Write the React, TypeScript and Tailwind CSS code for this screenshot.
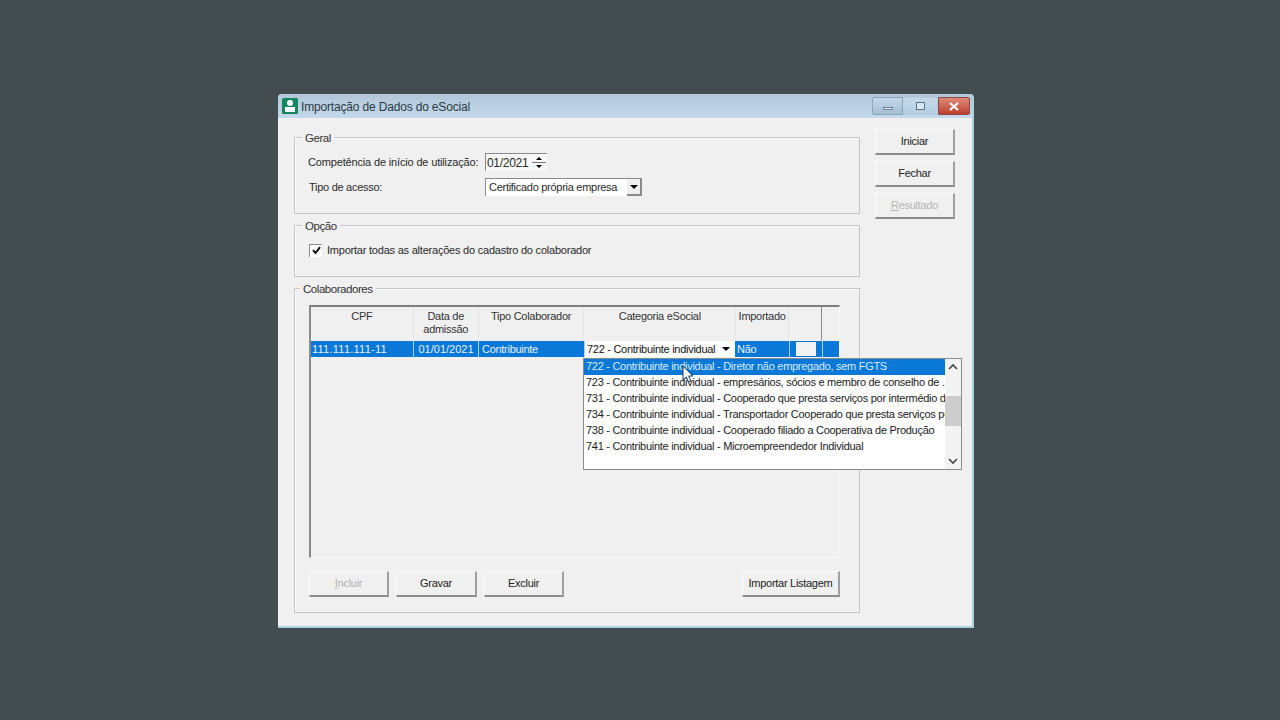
import React from "react";

const font = { fontFamily: '"Liberation Sans", Arial, sans-serif' };

function Btn({ label, w, disabled, u }: { label: string; w: string; disabled?: boolean; u?: boolean }) {
  return (
    <div className={`${w} h-[26px] flex items-center justify-center whitespace-nowrap bg-[#f0f0f0] border-t border-l border-t-[#fbfbfb] border-l-[#fbfbfb] border-r-2 border-b-2 border-r-[#a0a0a0] border-b-[#8c8c8c] ${disabled ? "text-[#b4b4b4]" : "text-[#222]"}`}>
      {u ? (
        <span>
          <span className="underline">{label[0]}</span>
          {label.slice(1)}
        </span>
      ) : (
        label
      )}
    </div>
  );
}

function Group({ title, h, children, left }: { title: string; h: string; children?: React.ReactNode; left: string }) {
  return (
    <div className={`relative ${h} border border-[#c4c6c6] shadow-[inset_1px_1px_0_#fafafa]`}>
      <div className={`absolute -top-[6px] ${left} px-[3px] bg-[#f0f0f1] leading-[13px] text-[#333] text-[11.5px] tracking-[-0.45px]`}>{title}</div>
      {children}
    </div>
  );
}

const options = [
  "722 - Contribuinte individual - Diretor não empregado, sem FGTS",
  "723 - Contribuinte individual - empresários, sócios e membro de conselho de ...",
  "731 - Contribuinte individual - Cooperado que presta serviços por intermédio de",
  "734 - Contribuinte individual - Transportador Cooperado que presta serviços por",
  "738 - Contribuinte individual - Cooperado filiado a Cooperativa de Produção",
  "741 - Contribuinte individual - Microempreendedor Individual",
];

const colW = ["w-[103px]", "w-[65px]", "w-[106px]", "w-[152px]", "w-[53px]", "w-[33px]"];

function Caret() {
  return <span className="block w-0 h-0 border-l-[4px] border-r-[4px] border-t-[4px] border-l-transparent border-r-transparent border-t-black" />;
}

export default function App() {
  return (
    <div className="w-[1280px] h-[720px] bg-[#434c4e] pt-[94px] pl-[278px] overflow-hidden text-[11px] tracking-[-0.28px]" style={font}>
      <div className="w-[696px] h-[534px] flex flex-col bg-[#f0f0f1] rounded-t-[4px] border-r-2 border-b-2 border-r-[#a9d4df] border-b-[#a9d4df] overflow-hidden">
        {/* title bar */}
        <div className="h-[24px] shrink-0 flex items-center bg-gradient-to-b from-[#b2c6d8] to-[#c3d9ec] pl-[4px] pr-[2px]">
          <svg width="16" height="16" viewBox="0 0 16 16" className="shrink-0">
            <rect width="16" height="16" rx="1.5" fill="#13885f" />
            <circle cx="8" cy="5" r="3" fill="#fff" />
            <rect x="3" y="9" width="10" height="5" fill="#fff" />
          </svg>
          <span className="ml-[3px] pt-px text-[12px] tracking-[-0.17px] text-[#2c3a44]">Importação de Dados do eSocial</span>
          <div className="ml-auto flex items-start h-[18px]">
            <div className="w-[31px] h-[18px] flex items-center justify-center rounded-l-[2px] border border-[#8ca4bb] bg-gradient-to-b from-[#c6d9ea] to-[#a4bdd4]">
              <span className="block w-[10px] h-[3px] mt-[5px] bg-[#e9f0f6] border border-[#6d8297]" />
            </div>
            <div className="w-[34px] h-[18px] flex items-center justify-center border-y border-[#b4cade] bg-gradient-to-b from-[#c6d9ea] to-[#b5cde2]">
              <span className="block w-[9px] h-[8px] bg-[#dce7f0] border border-[#5f7488]" />
            </div>
            <div className="ml-px w-[32px] h-[18px] flex items-center justify-center rounded-r-[2px] border border-[#8d4a42] bg-gradient-to-b from-[#de8a78] to-[#bd3f30]">
              <svg width="10" height="9" viewBox="0 0 10 9"><path d="M1 1 9 8M9 1 1 8" stroke="#fff" strokeWidth="2.2" /></svg>
            </div>
          </div>
        </div>

        {/* body */}
        <div className="relative flex-1 flex pl-[16px] pt-[11px]">
          <div className="w-[566px] mt-[8px] flex flex-col gap-[11px]">
            <Group title="Geral" h="h-[77px]" left="left-[7px]">
              <div className="flex items-center h-[22px] mt-[13px] pl-[13px] text-[#2a2a2a]">
                <span className="w-[177px] whitespace-nowrap tracking-[-0.16px]">Competência de início de utilização:</span>
                <div className="w-[62px] h-[18px] flex items-center bg-[#f7f7f7] border-t border-l border-[#8a8a8a]">
                  <span className="pl-[1px] text-[12px] tracking-[-0.3px]">01/2021</span>
                  <div className="ml-auto mr-[1px] w-[14px] h-[15px] flex flex-col items-center justify-between">
                    <span className="block w-0 h-0 mt-[2px] border-l-[3px] border-r-[3px] border-b-[3px] border-l-transparent border-r-transparent border-b-black" />
                    <span className="block w-full h-px bg-[#777]" />
                    <span className="block w-0 h-0 mb-[2px] border-l-[3px] border-r-[3px] border-t-[3px] border-l-transparent border-r-transparent border-t-black" />
                  </div>
                </div>
              </div>
              <div className="flex items-center h-[20px] mt-[4px] pl-[14px] text-[#2a2a2a]">
                <span className="w-[176px]">Tipo de acesso:</span>
                <div className="w-[157px] h-[18px] flex items-center bg-white border-t border-l border-[#8a8a8a] pl-[3px]">
                  <span className="whitespace-nowrap">Certificado própria empresa</span>
                  <div className="ml-auto w-[15px] h-[17px] flex items-center justify-center bg-[#f0f0f0] border-r-2 border-b-2 border-[#8c8c8c]">
                    <Caret />
                  </div>
                </div>
              </div>
            </Group>

            <Group title="Opção" h="h-[52px]" left="left-[7px]">
              <div className="flex items-center mt-[16px] pl-[14px] text-[#2a2a2a]">
                <div className="w-[13px] h-[13px] flex items-center justify-center bg-white border-t border-l border-[#8a8a8a]">
                  <svg width="9" height="9" viewBox="0 0 9 9"><path d="M1 4.2 3.5 7 8 1.2" fill="none" stroke="#111" strokeWidth="2" /></svg>
                </div>
                <span className="ml-[5px] tracking-[-0.22px]">Importar todas as alterações do cadastro do colaborador</span>
              </div>
            </Group>

            <Group title="Colaboradores" h="h-[325px]" left="left-[5px]">
              <div className="mx-[14px] mt-[16px] w-[531px] h-[253px] flex flex-col border-t-2 border-l-2 border-t-[#7d7f7f] border-l-[#8a8c8c] border-b border-b-[#f8f8f8] border-r border-r-[#f8f8f8]">
                <div className="h-[33px] flex leading-[13px] text-[#333] pr-[17px]">
                  {["CPF", "Data de\nadmissão", "Tipo Colaborador", "Categoria eSocial", "Importado", ""].map((t, i) => (
                    <div key={i} className={`${colW[i]} pt-[3px] text-center whitespace-pre-line border-r border-[#e2e2e2] last:border-r last:border-[#8a8a8a]`}>
                      {t}
                    </div>
                  ))}
                </div>
                <div className="h-[16px] mt-[1px] flex bg-[#0a78d6] leading-[16px] text-[#e6f1fb]">
                  <div className={`${colW[0]} pl-[1px] tracking-[0.25px] border-r border-[#a8d0f2]`}>111.111.111-11</div>
                  <div className={`${colW[1]} text-center tracking-[0px] border-r border-[#a8d0f2]`}>01/01/2021</div>
                  <div className={`${colW[2]} pl-[3px] border-r border-[#a8d0f2]`}>Contribuinte</div>
                  <div className={`${colW[3]} relative`}>
                    <div className="absolute left-0 top-0 w-[150px] h-[16px] flex items-center bg-white text-[#111] pl-[2px]">
                      <span className="whitespace-nowrap">722 - Contribuinte individual</span>
                      <div className="ml-auto w-[19px] flex justify-center">
                        <Caret />
                      </div>
                    </div>
                  </div>
                  <div className={`${colW[4]} border-r border-[#a8d0f2]`}>Não</div>
                  <div className={`${colW[5]} flex items-center justify-center border-r border-[#a8d0f2]`}>
                    <span className="block w-[20px] h-[14px] bg-[#f2f2f2]" />
                  </div>
                </div>
              </div>
              <div className="flex mt-[13px] pl-[14px] pr-[19px] gap-[7px]">
                <Btn label="Incluir" w="w-[80px]" disabled u />
                <Btn label="Gravar" w="w-[81px]" />
                <Btn label="Excluir" w="w-[80px]" />
                <div className="ml-auto">
                  <Btn label="Importar Listagem" w="w-[98px]" />
                </div>
              </div>
            </Group>
          </div>

          <div className="ml-[15px] flex flex-col gap-[6px]">
            <Btn label="Iniciar" w="w-[80px]" />
            <Btn label="Fechar" w="w-[80px]" />
            <Btn label="Resultado" w="w-[80px]" disabled u />
          </div>

          {/* dropdown list */}
          <div className="absolute left-[305px] top-[240px] w-[379px] h-[112px] flex bg-white border border-[#8a8c8c] leading-[14px] text-[#1c1c1c]">
            <div className="w-[361px] overflow-hidden">
              {options.map((o, i) => (
                <div key={i} className={`h-[16px] pl-[2px] whitespace-nowrap overflow-hidden ${i === 0 ? "bg-[#0a78d6] text-[#d9ebfa]" : ""}`}>
                  {o}
                </div>
              ))}
            </div>
            <div className="w-[16px] flex flex-col items-center bg-[#f3f3f3]">
              <svg width="10" height="16" viewBox="0 0 10 16" className="shrink-0"><path d="M1 10 5 6 9 10" fill="none" stroke="#444" strokeWidth="1.6" /></svg>
              <div className="w-full h-[21px] shrink-0" />
              <div className="w-full h-[30px] shrink-0 bg-[#cdcdcd]" />
              <svg width="10" height="16" viewBox="0 0 10 16" className="shrink-0 mt-auto"><path d="M1 6 5 10 9 6" fill="none" stroke="#444" strokeWidth="1.6" /></svg>
            </div>
          </div>

          {/* mouse pointer */}
          <svg width="12" height="19" viewBox="0 0 12 19" className="absolute left-[404px] top-[247px]">
            <path d="M1 1v14l3.3-3 2.2 5 2.4-1-2.2-5H11z" fill="#f5f8fb" stroke="#1b3a5a" strokeWidth="1" />
          </svg>
        </div>
      </div>
    </div>
  );
}
